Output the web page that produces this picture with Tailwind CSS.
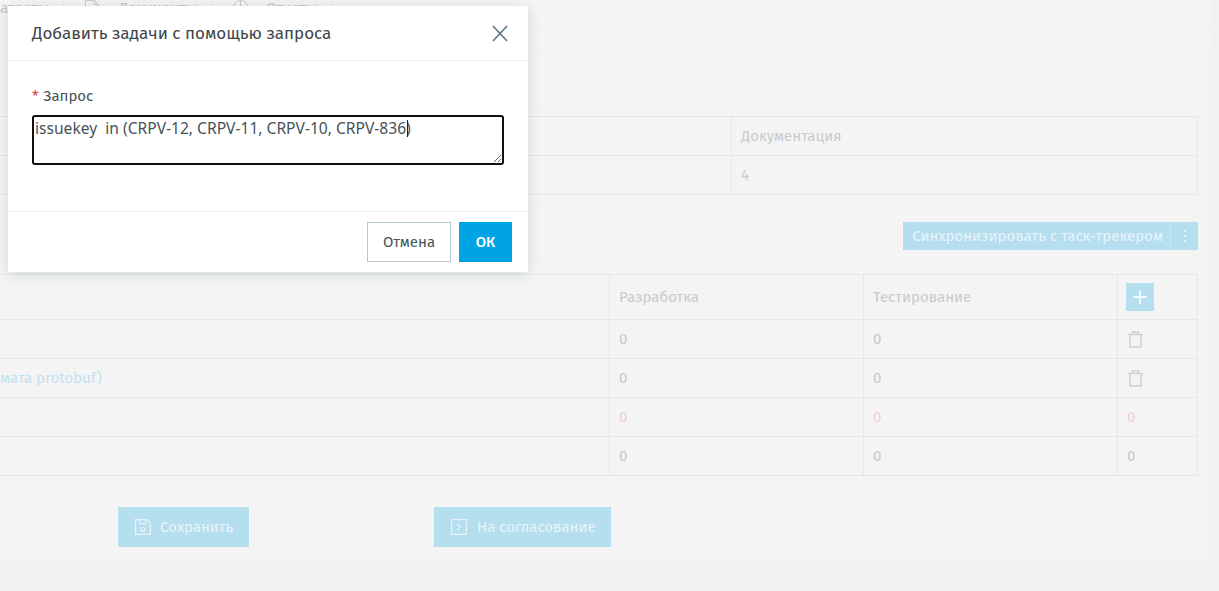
<!DOCTYPE html>
<html lang="en">
<head>
  <meta charset="UTF-8">
  <meta name="viewport" content="width=device-width, initial-scale=1.0">
  <title>Добавить задачи</title>
  <script src="https://cdn.jsdelivr.net/npm/@tailwindcss/browser@4"></script>
</head>
<body class="bg-[#f2f2f2] font-['Fira_Sans','Noto_Sans',sans-serif] overflow-hidden">
  <div class="relative w-[1219px] h-[591px] overflow-hidden">
    <!-- page behind the overlay -->
    <div class="w-[1211px] h-[561px] bg-[#f4f4f4] text-[15px] text-[#c9cbcc] overflow-hidden">
      <div class="h-[27px] border-b border-[#efefef]">
        <div class="flex items-start h-[16px] leading-[16px] text-[#c9c9c9]">
          <span class="w-[64px] h-[16px] border-r border-[#e9ecec]">атраты</span>
          <span class="w-[148px] h-[16px] pl-[21px] border-r border-[#e9ecec] flex gap-[20px]">
            <svg width="14" height="16" viewBox="0 0 14 16" fill="none" stroke="#c9c9c9"><path d="M.5.5h9l4 4v11H.5zM9.5.5v4h4"/></svg>
            <span>Документы</span>
          </span>
          <span class="w-[120px] h-[16px] pl-[20px] border-r border-[#e9ecec] flex gap-[17px]">
            <svg width="17" height="16" viewBox="0 0 17 16" fill="none" stroke="#c9c9c9"><circle cx="8.5" cy="8" r="7.5"/><path d="M8.5.5V8H16"/></svg>
            <span>Отчеты</span>
          </span>
        </div>
      </div>
      <div class="h-[26px] border-b border-[#efefef]"></div>
      <div class="border-r border-[#efefef]">
        <div class="h-[52px] border-b border-[#efefef]"></div>
        <div class="h-[103px] border-b border-[#efefef] pt-[11px] pr-[12px]">
          <div class="grid grid-cols-[732px_466px] border border-l-0 border-[#e3e8e9]">
            <div class="h-[39px] border-r border-b border-[#e3e8e9]"></div>
            <div class="h-[39px] border-b border-[#e3e8e9] pl-[9px] flex items-center">Документация</div>
            <div class="h-[38px] border-r border-[#e3e8e9]"></div>
            <div class="h-[38px] pl-[9px] flex items-center">4</div>
          </div>
        </div>
        <div class="h-[55px] border-b border-[#efefef] pr-[12px] flex justify-end items-center pt-[2px]">
          <div class="flex h-[28px] bg-[#b5deef] text-[#e8f4f9] items-center">
            <span class="pl-[9px] pr-[7px] border-r border-[#c5e5f2] h-full flex items-center">Синхронизировать с таск-трекером</span>
            <span class="w-[27px] flex justify-center">
              <svg width="3" height="14" viewBox="0 0 3 14" fill="#e8f4f9"><rect x="1" y="1" width="2" height="2"/><rect x="1" y="6" width="2" height="2"/><rect x="1" y="11" width="2" height="2"/></svg>
            </span>
          </div>
        </div>
        <div class="pt-[11px] pr-[12px] h-[227px] border-b border-[#efefef]">
          <div class="grid grid-cols-[610px_254px_254px_80px] border-t border-r border-b border-[#e3e8e9] [&>div]:border-[#e3e8e9]">
            <div class="h-[45px] border-r border-b"></div>
            <div class="h-[45px] border-r border-b pl-[9px] flex items-center">Разработка</div>
            <div class="h-[45px] border-r border-b pl-[9px] flex items-center">Тестирование</div>
            <div class="h-[45px] border-b pl-[8px] flex items-center">
              <span class="w-[28px] h-[28px] bg-[#b5deef] flex items-center justify-center">
                <svg width="16" height="16" viewBox="0 0 16 16" stroke="#eef7fb" stroke-width="2"><path d="M8 1v14M1 8h14"/></svg>
              </span>
            </div>

            <div class="h-[39px] border-r border-b"></div>
            <div class="h-[39px] border-r border-b pl-[9px] flex items-center text-[#c5c9cc]">0</div>
            <div class="h-[39px] border-r border-b pl-[9px] flex items-center text-[#c5c9cc]">0</div>
            <div class="h-[39px] border-b pl-[9px] flex items-center">
              <svg width="17" height="17" viewBox="0 0 17 17" fill="none" stroke="#cdd1d3" stroke-width="1.5"><path d="M1 3.5h15M3 3.5v12.5h11V3.5M5.5 3.5V1h6v2.5"/></svg>
            </div>

            <div class="h-[39px] border-r border-b flex items-center text-[#c2dff1]">мата protobuf)</div>
            <div class="h-[39px] border-r border-b pl-[9px] flex items-center text-[#c5c9cc]">0</div>
            <div class="h-[39px] border-r border-b pl-[9px] flex items-center text-[#c5c9cc]">0</div>
            <div class="h-[39px] border-b pl-[9px] flex items-center">
              <svg width="17" height="17" viewBox="0 0 17 17" fill="none" stroke="#cdd1d3" stroke-width="1.5"><path d="M1 3.5h15M3 3.5v12.5h11V3.5M5.5 3.5V1h6v2.5"/></svg>
            </div>

            <div class="h-[39px] border-r border-b"></div>
            <div class="h-[39px] border-r border-b pl-[9px] flex items-center text-[#efcfd3]">0</div>
            <div class="h-[39px] border-r border-b pl-[9px] flex items-center text-[#efcfd3]">0</div>
            <div class="h-[39px] border-b pl-[9px] flex items-center text-[#efcfd3]">0</div>

            <div class="h-[38px] border-r"></div>
            <div class="h-[38px] border-r pl-[9px] flex items-center text-[#c5c9cc]">0</div>
            <div class="h-[38px] border-r pl-[9px] flex items-center text-[#c5c9cc]">0</div>
            <div class="h-[38px] pl-[9px] flex items-center text-[#c5c9cc]">0</div>
          </div>
        </div>
        <div class="h-[72px] flex pl-[118px] pt-[17px] text-[#e8f4f9]">
          <div class="w-[131px] h-[40px] bg-[#b5deef] flex items-center pl-[17px] gap-[9px]">
            <svg width="16" height="16" viewBox="0 0 16 16" fill="none" stroke="#e8f4f9" stroke-width="1.2"><path d="M.6.6h11.5l3.3 3.3v11.5H.6zM4.5.6v4h6.5v-4"/><circle cx="8" cy="10.5" r="2"/></svg>
            <span>Сохранить</span>
          </div>
          <div class="ml-[185px] w-[177px] h-[40px] bg-[#b5deef] flex items-center pl-[17px] gap-[10px]">
            <svg width="16" height="16" viewBox="0 0 16 16" fill="none" stroke="#e8f4f9" stroke-width="1.2"><path d="M.6.6h14.8v14.8H.6zM6 5l3.5 3L6 11"/></svg>
            <span>На согласование</span>
          </div>
        </div>
      </div>
    </div>

    <!-- modal -->
    <div class="absolute left-[8px] top-[6px] w-[520px] h-[266px] bg-white flex flex-col shadow-[0_2px_12px_rgba(0,40,60,0.14)]">
      <div class="h-[55px] border-b border-[#f0f2f2] flex items-center justify-between pl-[24px] pr-[20px] pt-[1px]">
        <span class="text-[17px] text-[#3d4548]">Добавить задачи с помощью запроса</span>
        <svg width="16" height="17" viewBox="0 0 16 17" fill="none" stroke="#5f7a87" stroke-width="1.7"><path d="M1 1l14 15M15 1L1 16"/></svg>
      </div>
      <div class="h-[151px] border-b border-[#f0f2f2] pt-[25px] px-[24px]">
        <div class="text-[15px] leading-[20px] text-[#46535a] mb-[9px]"><span class="text-[#d9415f] mr-[5px]">*</span>Запрос</div>
        <div class="relative w-[472px] h-[50px]">
          <textarea class="block w-full h-full border-2 border-[#111] rounded-[3px] px-[1px] pt-[1px] font-['Noto_Sans',sans-serif] text-[15.6px] leading-[20px] text-[#46535a] outline-none">issuekey  in (CRPV-12, CRPV-11, CRPV-10, CRPV-836)</textarea>
          <span class="absolute left-[375px] top-[5px] w-px h-[17px] bg-[#222]"></span>
        </div>
      </div>
      <div class="flex-1 flex justify-end items-start pt-[10px] pr-[16px] gap-[8px] text-[15px]">
        <button class="w-[84px] h-[40px] border border-[#b9c9d0] text-[#46535a]">Отмена</button>
        <button class="w-[53px] h-[40px] bg-[#00a4e4] text-white font-medium">ОК</button>
      </div>
    </div>
  </div>
</body>
</html>
